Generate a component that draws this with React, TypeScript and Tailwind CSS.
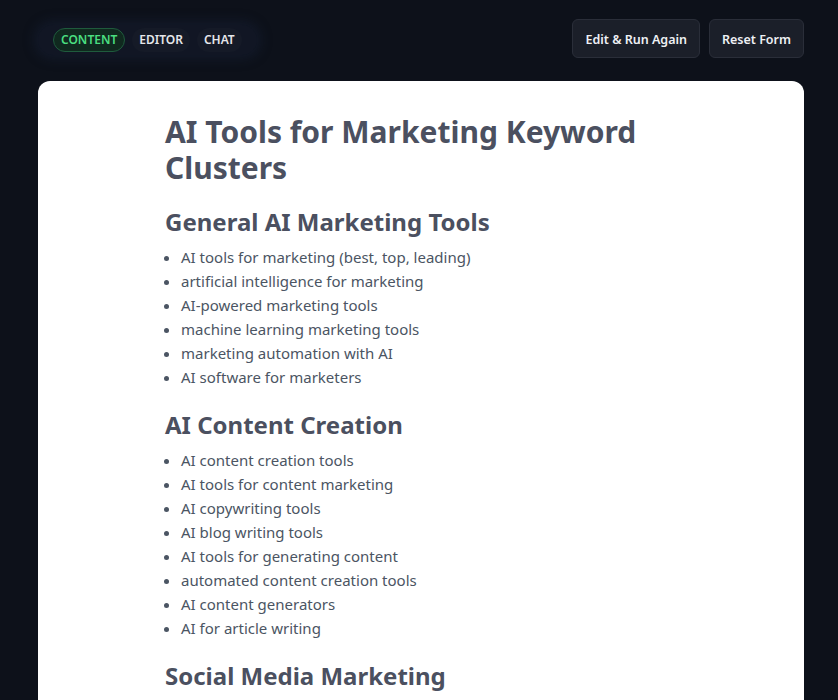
import React from "react";

const sections = [
  {
    title: "General AI Marketing Tools",
    items: [
      "AI tools for marketing (best, top, leading)",
      "artificial intelligence for marketing",
      "AI-powered marketing tools",
      "machine learning marketing tools",
      "marketing automation with AI",
      "AI software for marketers",
    ],
  },
  {
    title: "AI Content Creation",
    items: [
      "AI content creation tools",
      "AI tools for content marketing",
      "AI copywriting tools",
      "AI blog writing tools",
      "AI tools for generating content",
      "automated content creation tools",
      "AI content generators",
      "AI for article writing",
    ],
  },
  {
    title: "Social Media Marketing",
    items: [
      "AI social media tools",
      "AI tools for social media marketing",
      "AI social media post generators",
    ],
  },
];

export default function App() {
  return (
    <div
      className="min-h-screen bg-[#0d111a] text-gray-200"
      style={{ fontFamily: '"Noto Sans", "Open Sans", sans-serif' }}
    >
      {/* Header */}
      <div className="flex items-center justify-between pl-[38px] pr-[34px] pt-[19px] pb-[23px]">
        <div className="mt-[3px] flex items-center gap-[7px] rounded-full bg-[#111624] px-[15px] py-[3px] shadow-[0_0_12px_4px_rgba(30,40,70,0.35)]">
          <button className="h-6 rounded-full border border-[#1f5b3d] bg-[#10291f] px-[7px] text-[12px] font-semibold text-[#4ade80]">
            CONTENT
          </button>
          <button className="h-6 rounded-full bg-[#151a27] px-[7px] text-[12px] font-semibold text-[#e5e7eb]">
            EDITOR
          </button>
          <button className="h-6 rounded-full bg-[#151a27] px-[7px] text-[12px] font-semibold text-[#e5e7eb]">
            CHAT
          </button>
        </div>
        <div className="flex items-center gap-[9px]">
          <button className="h-[39px] rounded-md border border-[#2a2e39] bg-[#1b1f29] px-[12px] pt-[3px] text-[12.5px] font-semibold text-[#eef0f4]">
            Edit &amp; Run Again
          </button>
          <button className="h-[39px] rounded-md border border-[#2a2e39] bg-[#1b1f29] px-[12px] pt-[3px] text-[12.5px] font-semibold text-[#eef0f4]">
            Reset Form
          </button>
        </div>
      </div>

      {/* Content card */}
      <div className="ml-[38px] mr-[34px] rounded-t-xl bg-white pt-[33px] pb-10">
        <div className="mx-auto max-w-lg text-[#4b5060]">
          <h1 className="text-3xl font-bold">AI Tools for Marketing Keyword Clusters</h1>
          {sections.map((s) => (
            <div key={s.title}>
              <h2 className="mt-5 mb-[7px] text-2xl font-bold">{s.title}</h2>
              <ul className="list-disc pl-4 text-[15px] leading-6 text-[#4b5563]">
                {s.items.map((it) => (
                  <li key={it}>{it}</li>
                ))}
              </ul>
            </div>
          ))}
        </div>
      </div>
    </div>
  );
}
